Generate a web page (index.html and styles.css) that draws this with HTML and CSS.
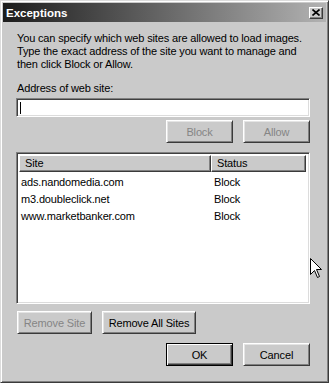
FILE: index.html
```html
<!DOCTYPE html>
<html lang="en">
<head>
  <meta charset="UTF-8">
  <title>Exceptions</title>
  <link rel="stylesheet" href="styles.css">
</head>
<body>
  <div class="window">
    <div class="titlebar">
      <span class="title">Exceptions</span>
      <span class="close">
        <svg width="8" height="7" viewBox="0 0 8 7">
          <path d="M0.5 0.5 L7.5 6.5 M7.5 0.5 L0.5 6.5" stroke="#000" stroke-width="1.6"/>
        </svg>
      </span>
    </div>
    <div class="content">
      <p class="intro">You can specify which web sites are allowed to load images.<br>Type the exact address of the site you want to manage and<br>then click Block or Allow.</p>
      <label class="field-label">Address of web site:</label>
      <div class="textbox"><span class="caret"></span></div>
      <div class="row-right">
        <button class="button" disabled>Block</button>
        <button class="button" disabled>Allow</button>
      </div>
      <div class="listbox">
        <div class="list-head">
          <div class="col-site">Site</div>
          <div class="col-status">Status</div>
        </div>
        <div class="list-row"><div class="col-site">ads.nandomedia.com</div><div class="col-status">Block</div></div>
        <div class="list-row"><div class="col-site">m3.doubleclick.net</div><div class="col-status">Block</div></div>
        <div class="list-row"><div class="col-site">www.marketbanker.com</div><div class="col-status">Block</div></div>
      </div>
      <div class="row-left">
        <button class="button remove-site" disabled>Remove Site</button>
        <button class="button remove-all">Remove All Sites</button>
      </div>
      <div class="row-right footer">
        <button class="button default">OK</button>
        <button class="button">Cancel</button>
      </div>
    </div>
    <svg class="cursor" width="13" height="21" viewBox="0 0 13 21">
      <polygon points="0.5,0.5 0.5,16.5 4.5,12.5 7.5,19.5 9.5,18.5 6.5,11.5 11.5,11.5" fill="#fff" stroke="#000" stroke-width="1"/>
    </svg>
  </div>
</body>
</html>
```

FILE: styles.css
```css
/* Reset */
* {
  margin: 0;
  padding: 0;
  box-sizing: border-box;
}

body {
  background: #cacaca;
  font-family: "Liberation Sans", Arial, sans-serif;
  font-size: 11px;
  letter-spacing: -0.15px;
  color: #000;
}

/* Window frame */
.window {
  position: relative;
  width: 329px;
  height: 383px;
  background: #cacaca;
  border: 1px solid;
  border-color: #dcdcdc #3a3a3a #3a3a3a #dcdcdc;
  box-shadow: inset 1px 1px 0 #fff, inset -1px -1px 0 #808080;
  padding: 2px;
}

.titlebar {
  display: flex;
  align-items: center;
  justify-content: space-between;
  height: 19px;
  padding: 0 3px 0 3px;
  background: linear-gradient(to right, #1c1c1c, #b2b2b2);
}

.title {
  color: #fff;
  font-weight: bold;
  font-size: 11.5px;
  letter-spacing: 0;
}

.close {
  display: flex;
  align-items: center;
  justify-content: center;
  width: 14px;
  height: 12px;
  background: #cacaca;
  border: 1px solid;
  border-color: #fff #3a3a3a #3a3a3a #fff;
  box-shadow: inset -1px -1px 0 #808080;
}

/* Dialog body */
.content {
  display: flex;
  flex-direction: column;
  padding: 10px 16px 0 13px;
}

.intro {
  line-height: 13px;
  padding-left: 1px;
  white-space: nowrap;
}

.field-label {
  display: block;
  margin-top: 11px;
  line-height: 13px;
  padding-left: 1px;
}

.textbox {
  margin-top: 3px;
  height: 19px;
  background: #fff;
  border: 1px solid;
  border-color: #808080 #fff #fff #808080;
  box-shadow: inset 1px 1px 0 #404040, inset -1px -1px 0 #dcdcdc;
  padding: 3px 3px;
}

.caret {
  display: block;
  width: 1px;
  height: 12px;
  background: #000;
}

.row-right {
  display: flex;
  justify-content: flex-end;
  gap: 10px;
  margin-top: 3px;
}

.row-left {
  display: flex;
  gap: 10px;
  margin-top: 7px;
  padding-left: 1px;
}

.footer {
  margin-top: 9px;
}

/* Classic push buttons */
.button {
  width: 67px;
  height: 23px;
  font-family: "Liberation Sans", Arial, sans-serif;
  font-size: 11px;
  letter-spacing: -0.15px;
  color: #000;
  background: #cacaca;
  border: 1px solid;
  border-color: #fff #3a3a3a #3a3a3a #fff;
  box-shadow: inset 1px 1px 0 #e4e4e4, inset -1px -1px 0 #808080;
}

.button:disabled {
  color: #858585;
}

.button.remove-site {
  width: 75px;
}

.button.remove-all {
  width: 94px;
}

.button.default {
  border: 1px solid #000;
  box-shadow: inset 1px 1px 0 #fff, inset -1px -1px 0 #3a3a3a, inset -2px -2px 0 #808080;
}

/* Site list */
.listbox {
  margin-top: 9px;
  height: 152px;
  background: #fff;
  border: 1px solid;
  border-color: #808080 #fff #fff #808080;
  box-shadow: inset 1px 1px 0 #404040, inset -1px -1px 0 #dcdcdc;
  padding: 2px 3px 2px 2px;
}

.list-head {
  display: flex;
  height: 17px;
  margin-bottom: 1px;
}

.list-head > div {
  background: #cacaca;
  border: 1px solid;
  border-color: #fff #3a3a3a #3a3a3a #fff;
  box-shadow: inset -1px -1px 0 #808080;
  padding: 1px 5px;
  line-height: 13px;
}

.list-head .col-site {
  width: 192px;
}

.list-head .col-status {
  flex: 1;
}

.list-row {
  display: flex;
  height: 17px;
  align-items: center;
}

.list-row .col-site {
  width: 192px;
  padding-left: 2px;
}

.list-row .col-status {
  padding-left: 3px;
}

/* Mouse pointer over the dialog */
.cursor {
  position: absolute;
  left: 309px;
  top: 257px;
}
```
